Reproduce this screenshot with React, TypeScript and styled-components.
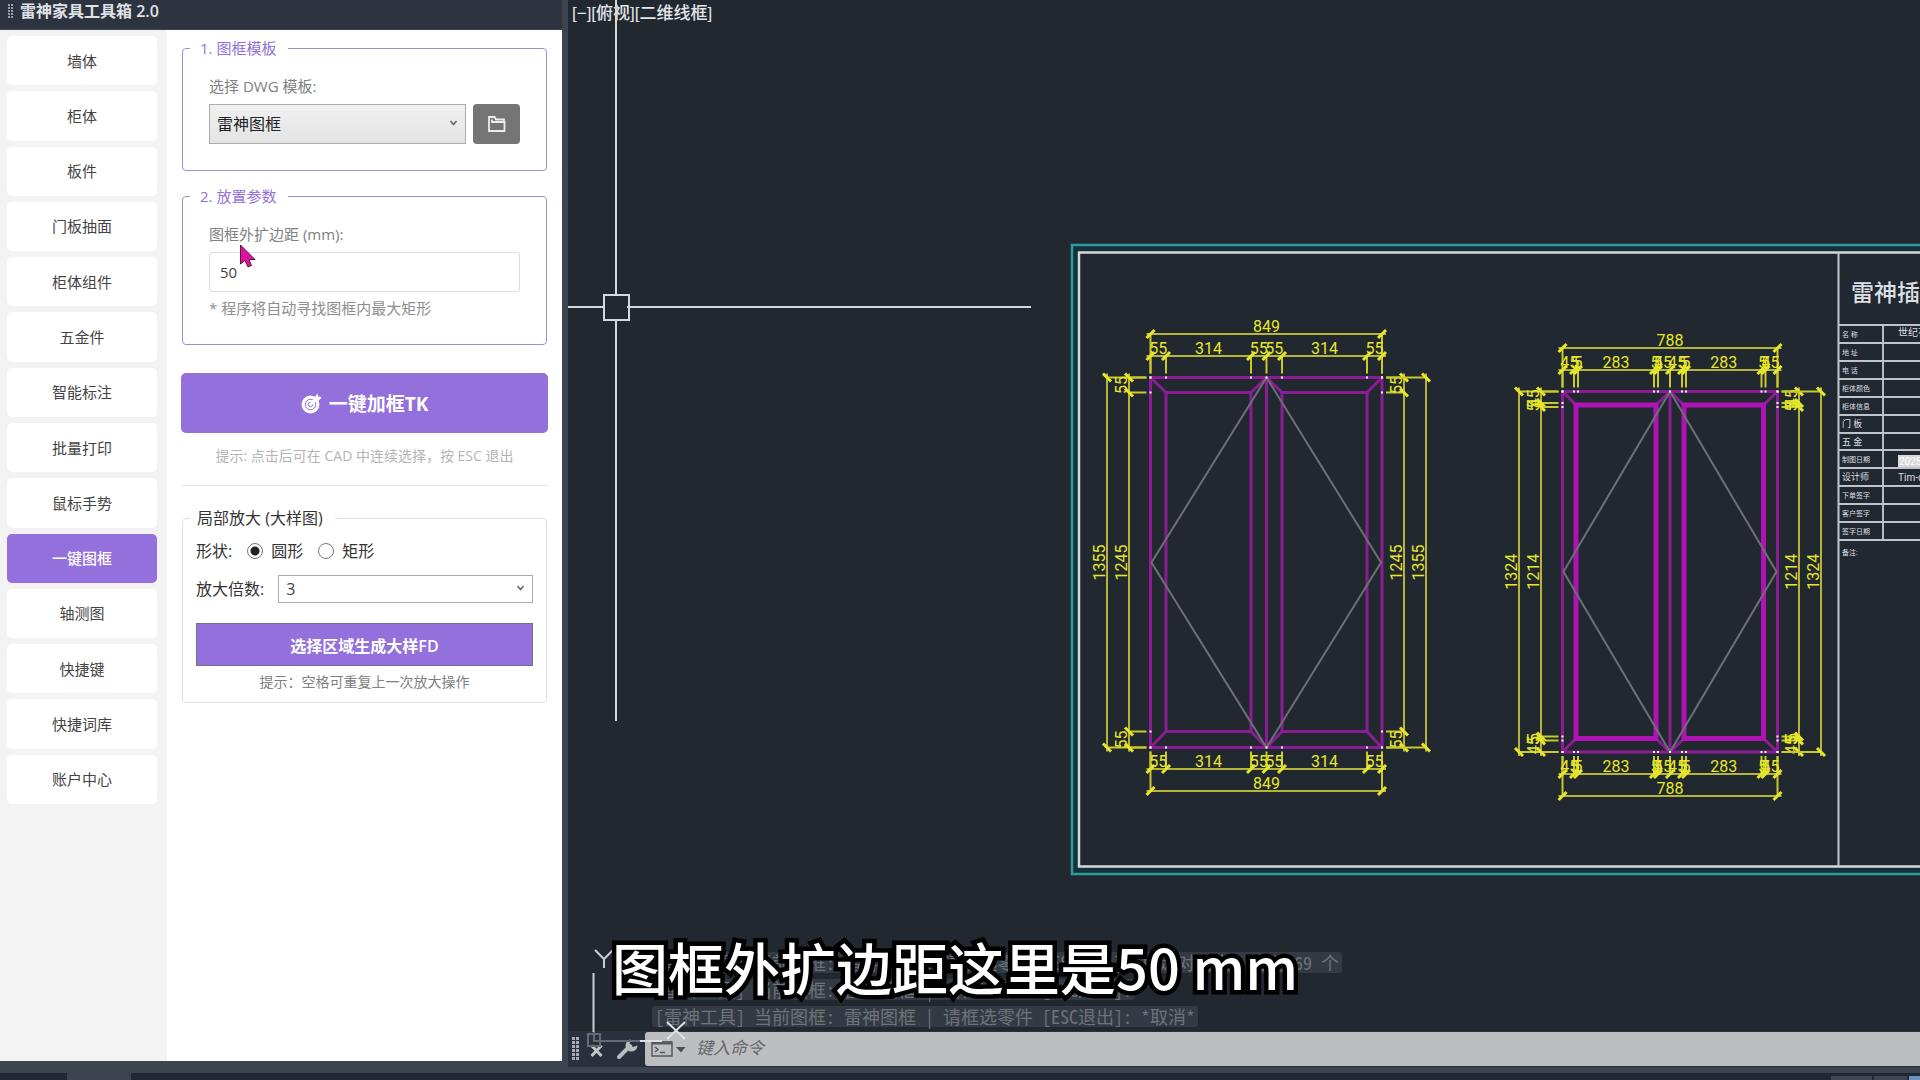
import React, { useState } from "react";
import styled, { createGlobalStyle } from "styled-components";

const UI_FONT = `"Open Sans", "Noto Sans CJK SC", sans-serif`;
const CAD_FONT = `Roboto, "Noto Sans CJK SC", sans-serif`;
const PURPLE = "#9370db";
const YELLOW = "#e6e62a";

const GlobalStyle = createGlobalStyle`
  * { box-sizing: border-box; }
  body { margin: 0; background: #222833; font-family: ${UI_FONT}; overflow: hidden; }
  button, input, select { font-family: inherit; }
`;

const Screen = styled.div`
  display: flex;
  flex-direction: column;
  height: 100vh;
  background: #3c444f;
`;

const Main = styled.div`
  display: flex;
  flex: 1;
  min-height: 0;
`;

/* ---------- tool palette ---------- */

const Palette = styled.aside`
  display: flex;
  flex-direction: column;
  width: 562px;
  margin-bottom: 6px;
  flex-shrink: 0;
`;

const TitleBar = styled.header`
  display: flex;
  align-items: center;
  gap: 6px;
  height: 30px;
  padding: 0 8px 7px;
  background: #2e3340;
  border-bottom: 1px solid #3d4452;
  color: #dfe2e6;
`;

const Title = styled.h1`
  margin: 0;
  font-size: 16px;
  line-height: 20px;
  font-weight: 600;
`;

const PaletteBody = styled.div`
  display: flex;
  flex: 1;
  min-height: 0;
`;

const Sidebar = styled.nav`
  width: 167px;
  padding: 6px 10px 0 7px;
  background: #f3f3f3;
`;

const NavList = styled.div`
  display: grid;
  grid-auto-rows: 1fr;
  gap: 6px;
  height: 768px;
`;

const NavButton = styled.button<{ $active?: boolean }>`
  border: 0;
  border-radius: 5px;
  padding: 0;
  background: ${(p) => (p.$active ? PURPLE : "#fff")};
  color: ${(p) => (p.$active ? "#fff" : "#444")};
  font-size: 15px;
  line-height: 20px;
  font-weight: ${(p) => (p.$active ? 500 : 400)};
`;

const Panel = styled.section`
  flex: 1;
  padding: 8px 14px;
  background: #fff;
`;

const Group = styled.fieldset<{ $plain?: boolean }>`
  min-width: 0;
  margin: 0 1px 15px;
  padding: ${(p) => (p.$plain ? "13px 13px 10px" : "18px 26px 26px")};
  border: 1px solid ${(p) => (p.$plain ? "#dce2e5" : "#9c8fcb")};
  border-radius: 4px;
`;

const Legend = styled.legend<{ $plain?: boolean }>`
  margin-left: ${(p) => (p.$plain ? -6 : -19)}px;
  padding: ${(p) => (p.$plain ? "0 12px 0 7px" : "0 12px 0 10px")};
  font-size: ${(p) => (p.$plain ? 16 : 15)}px;
  line-height: 20px;
  color: ${(p) => (p.$plain ? "#333" : PURPLE)};
`;

const FieldLabel = styled.label`
  display: block;
  margin-bottom: 8px;
  font-size: 15px;
  line-height: 20px;
  color: #808080;
`;

const TemplateRow = styled.div`
  display: flex;
  gap: 7px;
`;

const SelectWrap = styled.div`
  position: relative;
  flex: 1;
  display: flex;
`;

const Select = styled.select<{ $flat?: boolean }>`
  appearance: none;
  flex: 1;
  height: ${(p) => (p.$flat ? 28 : 40)}px;
  padding: 0 24px 0 7px;
  border: 1px solid #acacac;
  border-radius: 0;
  background: ${(p) => (p.$flat ? "#fff" : "linear-gradient(#f0f0f0, #e4e4e4)")};
  color: ${(p) => (p.$flat ? "#444" : "#222")};
  font-size: 16px;
`;

const SelectArrow = styled.svg`
  position: absolute;
  right: 8px;
  top: calc(50% - 5px);
  pointer-events: none;
`;

const BrowseButton = styled.button`
  display: grid;
  place-items: center;
  width: 47px;
  height: 40px;
  padding: 0;
  border: 0;
  border-radius: 4px;
  background: #757575;
`;

const TextInput = styled.input`
  display: block;
  width: 100%;
  height: 40px;
  padding: 0 10px;
  border: 1px solid #ddd;
  border-radius: 3px;
  background: #fff;
  color: #444;
  font-size: 15px;
`;

const Note = styled.p`
  margin: 6px 0 0;
  font-size: 15px;
  line-height: 20px;
  color: #8e8e8e;
`;

const PrimaryButton = styled.button`
  display: flex;
  align-items: center;
  justify-content: center;
  gap: 7px;
  width: 100%;
  height: 60px;
  margin-top: 28px;
  border: 0;
  border-radius: 5px;
  background: ${PURPLE};
  color: #fff;
  font-size: 19px;
  font-weight: 700;
`;

const Tip = styled.p<{ $light?: boolean }>`
  margin: ${(p) => (p.$light ? "13px 0 19px" : "6px 0 0")};
  font-size: 14px;
  line-height: 20px;
  text-align: center;
  color: ${(p) => (p.$light ? "#b4b4b4" : "#808080")};
`;

const Divider = styled.hr`
  height: 1px;
  margin: 0 0 22px;
  border: 0;
  background: #e6e6e6;
`;

const ShapeRow = styled.div`
  display: flex;
  align-items: center;
  height: 20px;
  font-size: 16px;
  line-height: 20px;
  color: #333;
`;

const RadioLabel = styled.label`
  display: flex;
  align-items: center;
  gap: 8px;
  margin-left: 15px;
`;

const Radio = styled.input`
  appearance: none;
  width: 16px;
  height: 16px;
  margin: 0;
  border: 1px solid #777;
  border-radius: 50%;
  background: #fff;
  &:checked {
    background: radial-gradient(circle, #222 0 4px, #fff 5px);
  }
`;

const ScaleRow = styled.div`
  display: flex;
  align-items: center;
  gap: 14px;
  margin: 14px 0 20px;
  font-size: 16px;
  line-height: 20px;
  color: #333;
`;

const RegionButton = styled.button`
  width: 100%;
  height: 43px;
  border: 1px solid #75708a;
  background: ${PURPLE};
  color: #fff;
  font-size: 16px;
  font-weight: 600;
`;

/* ---------- drawing workspace ---------- */

const Workspace = styled.main`
  position: relative;
  display: flex;
  flex-direction: column;
  flex: 1;
  min-width: 0;
  margin-left: 6px;
  overflow: hidden;
  background: #212830;
`;

const ViewLabel = styled.div`
  flex: 1;
  padding: 3px 4px;
  color: #e3e5e8;
  font-family: "Liberation Sans", "Noto Sans CJK SC", sans-serif;
  font-size: 17px;
  line-height: 22px;
  font-weight: 500;
`;

const Overlay = styled.svg`
  position: absolute;
  inset: 0;
  width: 100%;
  height: 100%;
  pointer-events: none;
`;

const History = styled.ol`
  display: flex;
  flex-direction: column;
  align-items: flex-start;
  gap: 6px;
  margin: 0 0 4px 84px;
  padding: 0;
  list-style: none;
`;

const HistoryLine = styled.li`
  padding: 0 3px;
  border-radius: 3px;
  background: #343a43;
  color: #6d7379;
  font-family: "Noto Sans Mono CJK SC", "Liberation Mono", "Noto Sans CJK SC", monospace;
  font-size: 18px;
  line-height: 21px;
  white-space: pre;
`;

const CommandBar = styled.div`
  display: flex;
  align-items: center;
  height: 36px;
  background: #2b313c;
`;

const IconButton = styled.button`
  display: grid;
  place-items: center;
  padding: 0;
  border: 0;
  background: none;
`;

const CommandTools = styled.div`
  display: flex;
  align-items: center;
  gap: 10px;
  width: 77px;
  padding-left: 4px;
`;

const CommandField = styled.div`
  display: flex;
  align-items: center;
  flex: 1;
  height: 34px;
  padding-left: 6px;
  border-radius: 3px 0 0 3px;
  background: #bcbec0;
`;

const CommandInput = styled.input`
  flex: 1;
  height: 34px;
  padding: 0 0 4px 9px;
  border: 0;
  background: none;
  font-size: 17px;
  font-style: italic;
  &::placeholder { color: #65696d; }
`;

const Subtitle = styled.div`
  position: absolute;
  left: 612px;
  bottom: 72px;
  color: #fff;
  font-family: "Noto Sans CJK SC", sans-serif;
  font-size: 56px;
  line-height: 84px;
  font-weight: 500;
  white-space: nowrap;
  -webkit-text-stroke: 9px #000;
  paint-order: stroke fill;
  stroke-linejoin: round;
`;

const Pointer = styled.svg`
  position: absolute;
  left: 239px;
  top: 244px;
`;

const StatusBar = styled.footer`
  display: flex;
  justify-content: space-between;
  height: 7px;
  margin-top: 6px;
  background: #222833;
`;

const StatusTab = styled.div`
  width: 64px;
  margin-left: 67px;
  background: #3c444f;
`;

const StatusButtons = styled.div`
  display: flex;
  gap: 2px;
  padding-top: 3px;
`;

const StatusChip = styled.div<{ $w: number; $on?: boolean }>`
  width: ${(p) => p.$w}px;
  background: ${(p) => (p.$on ? "#6f93bd" : "#3f4654")};
`;

/* ---------- drawing primitives ---------- */

type Pt = { x: number; y: number };

const Tick = ({ x, y }: Pt) => (
  <path d={`M${x - 4} ${y + 4}L${x + 4} ${y - 4}`} stroke={YELLOW} strokeWidth={3} />
);

const TickV = ({ x, y }: Pt) => (
  <path d={`M${x - 4} ${y - 4}L${x + 4} ${y + 4}`} stroke={YELLOW} strokeWidth={3} />
);

const DimText = ({ x, y, children, vertical }: Pt & { children: string; vertical?: boolean }) => (
  <text
    x={x}
    y={y}
    fill={YELLOW}
    fontFamily={CAD_FONT}
    fontSize={16}
    textAnchor="middle"
    transform={vertical ? `rotate(-90 ${x} ${y})` : undefined}
  >
    {children}
  </text>
);

type DimRow = { at: number; stops: number[]; labels: { at: number; text: string }[]; ext: number };

const HDim = ({ at, stops, labels, ext }: DimRow) => (
  <g>
    <path d={`M${stops[0] - 4} ${at}H${stops[stops.length - 1] + 4}`} stroke="#b5b53a" strokeWidth={2} />
    {stops.map((s) => (
      <g key={s}>
        <path d={`M${s} ${at}V${ext}`} stroke="#c9c92e" strokeWidth={2} />
        <Tick x={s} y={at} />
      </g>
    ))}
    {labels.map((l, i) => (
      <DimText key={i} x={l.at} y={at - 2}>{l.text}</DimText>
    ))}
  </g>
);

const VDim = ({ at, stops, labels, ext }: DimRow) => (
  <g>
    <path d={`M${at} ${stops[0] - 4}V${stops[stops.length - 1] + 4}`} stroke="#b5b53a" strokeWidth={2} />
    {stops.map((s) => (
      <g key={s}>
        <path d={`M${at} ${s}H${ext}`} stroke="#c9c92e" strokeWidth={2} />
        <TickV x={at} y={s} />
      </g>
    ))}
    {labels.map((l, i) => (
      <DimText key={i} x={at - 2} y={l.at} vertical>{l.text}</DimText>
    ))}
  </g>
);

type Door = {
  xs: number[];
  ys: number[];
  inner: number;
  innerColor: string;
  hTop: [number, number];
  hBottom: [number, number];
  vLeft: [number, number];
  vRight: [number, number];
  width: string;
  height: string;
  innerHeight: string;
  leaf: string;
  split: number;
};

const FRAME = "#8a1d93";

const DoorDrawing = ({ d }: { d: Door }) => {
  const [x0, x1, x2, xc, x3, x4, x5] = d.xs;
  const [y0, y1, y2, y3] = d.ys;
  const mid = (y0 + y3) / 2;
  const s = d.split;
  const pair = (v: number) => (s ? [v - s, v + s] : [v]);
  const hStops = [x0, ...pair(x1), ...pair(x2), xc, ...pair(x3), ...pair(x4), x5];
  const vStops = [y0, ...pair(y1), ...pair(y2), y3];
  const small = (a: number, b: number, outerFirst: boolean) => {
    const m = (a + b) / 2;
    if (!s) return [{ at: m, text: "55" }];
    const edge = outerFirst ? b : a;
    return [{ at: m, text: "45" }, { at: edge - 1, text: "5" }, { at: edge + 2, text: "5" }];
  };
  const hLabels = [
    ...small(x0, x1, true),
    { at: (x1 + x2) / 2, text: d.leaf },
    ...small(x2, xc, false),
    ...small(xc, x3, true),
    { at: (x3 + x4) / 2, text: d.leaf },
    ...small(x4, x5, false),
  ];
  const vLabels = [
    ...small(y0, y1, true),
    { at: mid, text: d.innerHeight },
    ...small(y2, y3, false),
  ];
  const whole = [{ at: xc, text: d.width }];
  const tall = [{ at: mid, text: d.height }];
  return (
    <g fill="none">
      <g stroke={FRAME} strokeWidth={3}>
        <path d={`M${x0} ${y0}H${x5}V${y3}H${x0}ZM${xc} ${y0}V${y3}`} />
        <path
          d={`M${x0} ${y0}L${x1} ${y1}M${xc} ${y0}L${x2} ${y1}M${xc} ${y0}L${x3} ${y1}M${x5} ${y0}L${x4} ${y1}
              M${x0} ${y3}L${x1} ${y2}M${xc} ${y3}L${x2} ${y2}M${xc} ${y3}L${x3} ${y2}M${x5} ${y3}L${x4} ${y2}`}
        />
      </g>
      <path
        d={`M${x1} ${y1}H${x2}V${y2}H${x1}ZM${x3} ${y1}H${x4}V${y2}H${x3}Z`}
        stroke={d.innerColor}
        strokeWidth={d.inner}
      />
      <path
        d={`M${xc} ${y0}L${x0 + 1} ${mid}L${xc} ${y3}L${x5 - 1} ${mid}Z`}
        stroke="#6c7074"
        strokeWidth={2}
      />
      <HDim at={d.hTop[0]} stops={[x0, x5]} labels={whole} ext={y0 - 4} />
      <HDim at={d.hTop[1]} stops={hStops} labels={hLabels} ext={y0 - 4} />
      <HDim at={d.hBottom[1]} stops={[x0, x5]} labels={whole} ext={y3 + 4} />
      <HDim at={d.hBottom[0]} stops={hStops} labels={hLabels} ext={y3 + 4} />
      <VDim at={d.vLeft[0]} stops={[y0, y3]} labels={tall} ext={x0 - 4} />
      <VDim at={d.vLeft[1]} stops={vStops} labels={vLabels} ext={x0 - 4} />
      <VDim at={d.vRight[0]} stops={vStops} labels={vLabels} ext={x5 + 4} />
      <VDim at={d.vRight[1]} stops={[y0, y3]} labels={tall} ext={x5 + 4} />
      <g fill="#fff">
        {hStops.map((x) => [y0, y3].map((y) => <rect key={`${x}-${y}`} x={x - 1} y={y - 1} width={2} height={2} />))}
        {vStops.map((y) => [x0, x5].map((x) => <rect key={`${x}-${y}`} x={x - 1} y={y - 1} width={2} height={2} />))}
      </g>
    </g>
  );
};

const doors: Door[] = [
  {
    xs: [1150.5, 1166, 1251, 1266.5, 1282, 1367, 1382],
    ys: [377.5, 392.5, 731.5, 747.5],
    inner: 3, innerColor: FRAME, split: 0,
    hTop: [334, 356], hBottom: [769, 791], vLeft: [1107, 1129], vRight: [1404, 1426],
    width: "849", height: "1355", innerHeight: "1245", leaf: "314",
  },
  {
    xs: [1562.5, 1576, 1656, 1670, 1684, 1763.5, 1777.5],
    ys: [391.5, 405, 738.5, 752],
    inner: 5, innerColor: "#b013b5", split: 2,
    hTop: [348, 370], hBottom: [774, 796], vLeft: [1519, 1541], vRight: [1799, 1821],
    width: "788", height: "1324", innerHeight: "1214", leaf: "283",
  },
];

const titleRows = [
  "名  称", "地  址", "电  话", "柜体颜色", "柜体信息", "门   板", "五   金",
  "制图日期", "设计师", "下单签字", "客户签字", "签字日期",
];
const rowTop = (i: number) => 325 + Math.round((i * 215) / 12);

const DrawingSheet = () => (
  <g fill="none">
    <rect x={1076} y={249} width={1100} height={621} stroke="#12323a" strokeWidth={5} />
    <rect x={1072} y={245} width={1100} height={629} stroke="#2f9b9b" strokeWidth={2.5} />
    <path d="M2000 252.5H1079V866.5H2000" stroke="#d5d7d9" strokeWidth={2.5} />
    <path d="M1838.5 252V866" stroke="#c4c7cc" strokeWidth={2} />
    <path d="M1883 325V540" stroke="#b9bcc4" strokeWidth={2} />
    {Array.from({ length: 13 }, (_, i) => (
      <path key={i} d={`M1838 ${rowTop(i)}H2000`} stroke="#c0c3cb" strokeWidth={2} />
    ))}
    <g fill="#dcdfe3" fontFamily={CAD_FONT} fontSize={10} style={{ whiteSpace: "pre" }}>
      {titleRows.map((t, i) => (
        <text key={t} x={1842} y={rowTop(i) + 12} fontSize={t.length === 4 ? 7 : 9}>{t}</text>
      ))}
      <text x={1842} y={555} fontSize={7}>备注:</text>
      <text x={1898} y={336}>世纪花园</text>
      <rect x={1898} y={455} width={60} height={12} fill="#d9d9d9" />
      <text x={1899} y={465} fill="#fff">2025</text>
      <text x={1898} y={481}>Tim-design</text>
      <text x={1851} y={301} fontSize={23} fontWeight={500}>雷神插件</text>
    </g>
  </g>
);

const Crosshair = () => (
  <g fill="none" stroke="#d6d8db" strokeWidth={2}>
    <path d="M616 0V294M616 321V721M568 307H603M627 307H1031" />
    <rect x={604} y={295} width={25} height={25} />
  </g>
);

const UcsIcon = () => (
  <g fill="none" stroke="#c9ccd0" strokeWidth={2}>
    <path d="M593.5 973V1032M595 950L604 959L613 950M604 959V968" />
    <path d="M594 1032V1041H640" stroke="#656b75" />
    <path d="M640 1041H662" stroke="#dfe0e1" />
    <rect x={588} y={1034} width={12} height={12} stroke="#656b75" />
    <path d="M667 1022L685 1039M685 1022L667 1039" stroke="#dfe0e1" />
  </g>
);

const Grip = ({ cols, rows, color, pitch }: { cols: number; rows: number; color: string; pitch: number }) => (
  <svg width={cols * pitch} height={rows * pitch} fill={color} style={{ flexShrink: 0 }}>
    {Array.from({ length: cols * rows }, (_, i) => (
      <rect key={i} x={(i % cols) * pitch} y={Math.floor(i / cols) * pitch} width={pitch - 1} height={pitch - 1} />
    ))}
  </svg>
);

const Chevron = () => (
  <SelectArrow width={9} height={8} viewBox="0 0 9 8" fill="none" stroke="#666" strokeWidth={1.6}>
    <path d="M1.5 2L4.5 5.5L7.5 2" />
  </SelectArrow>
);

const FolderIcon = () => (
  <svg width={20} height={18} viewBox="0 0 20 18" fill="none" stroke="#e9efec" strokeWidth={1.8}>
    <path d="M2 5V2H7.500L9 4.500H17V7M2 5V16H17.500V7H5V4.500" />
  </svg>
);

const TargetIcon = () => (
  <svg width={21} height={21} viewBox="0 0 21 21" fill="none">
    <circle cx={9.5} cy={11.5} r={9} fill="#fff" />
    <circle cx={9.5} cy={11.5} r={5.2} stroke={PURPLE} strokeWidth={1} />
    <circle cx={9.5} cy={11.5} r={2.2} stroke={PURPLE} strokeWidth={1} />
    <path d="M9.5 11.5L14 7" stroke="#fff" strokeWidth={2.6} />
    <path d="M12.5 6L16.5 0.5L17.5 3.5L20.8 4.5L16 9Z" fill="#fff" />
  </svg>
);

const navItems = [
  "墙体", "柜体", "板件", "门板抽面", "柜体组件", "五金件", "智能标注", "批量打印",
  "鼠标手势", "一键图框", "轴测图", "快捷键", "快捷词库", "账户中心",
];

const prompt = "[雷神工具] 当前图框: 雷神图框 | 请框选零件 [ESC退出]:";
const history = [`${prompt} 指定对角点: 找到 69 个`, prompt, `${prompt} *取消*`];

export default function App() {
  const [active, setActive] = useState("一键图框");
  const [shape, setShape] = useState("圆形");
  return (
    <>
      <GlobalStyle />
      <Screen>
        <Main>
          <Palette>
            <TitleBar>
              <Grip cols={2} rows={5} color="#9aa0a8" pitch={3} />
              <Title>雷神家具工具箱 2.0</Title>
            </TitleBar>
            <PaletteBody>
              <Sidebar>
                <NavList>
                  {navItems.map((n) => (
                    <NavButton key={n} $active={n === active} onClick={() => setActive(n)}>{n}</NavButton>
                  ))}
                </NavList>
              </Sidebar>
              <Panel>
                <Group>
                  <Legend>1. 图框模板</Legend>
                  <FieldLabel htmlFor="template">选择 DWG 模板:</FieldLabel>
                  <TemplateRow>
                    <SelectWrap>
                      <Select id="template"><option>雷神图框</option></Select>
                      <Chevron />
                    </SelectWrap>
                    <BrowseButton aria-label="浏览"><FolderIcon /></BrowseButton>
                  </TemplateRow>
                </Group>
                <Group>
                  <Legend>2. 放置参数</Legend>
                  <FieldLabel htmlFor="margin">图框外扩边距 (mm):</FieldLabel>
                  <TextInput id="margin" defaultValue="50" />
                  <Note>* 程序将自动寻找图框内最大矩形</Note>
                </Group>
                <PrimaryButton><TargetIcon />一键加框TK</PrimaryButton>
                <Tip $light>提示: 点击后可在 CAD 中连续选择，按 ESC 退出</Tip>
                <Divider />
                <Group $plain>
                  <Legend $plain>局部放大 (大样图)</Legend>
                  <ShapeRow>
                    形状:
                    {["圆形", "矩形"].map((s) => (
                      <RadioLabel key={s}>
                        <Radio type="radio" name="shape" checked={shape === s} onChange={() => setShape(s)} />
                        {s}
                      </RadioLabel>
                    ))}
                  </ShapeRow>
                  <ScaleRow>
                    <label htmlFor="scale">放大倍数:</label>
                    <SelectWrap>
                      <Select id="scale" $flat><option>3</option></Select>
                      <Chevron />
                    </SelectWrap>
                  </ScaleRow>
                  <RegionButton>选择区域生成大样FD</RegionButton>
                  <Tip>提示：空格可重复上一次放大操作</Tip>
                </Group>
              </Panel>
            </PaletteBody>
          </Palette>
          <Workspace>
            <ViewLabel>[−][俯视][二维线框]</ViewLabel>
            <History>
              {history.map((h) => <HistoryLine key={h}>{h}</HistoryLine>)}
            </History>
            <CommandBar>
              <CommandTools>
                <Grip cols={2} rows={6} color="#a9adb3" pitch={4} />
                <IconButton aria-label="关闭">
                  <svg width={13} height={20} viewBox="0 0 13 20" stroke="#c3c6ca" strokeWidth={3}>
                    <path d="M1.5 6.5L11.5 17M11.5 6.5L1.5 17" />
                  </svg>
                </IconButton>
                <IconButton aria-label="自定义">
                  <svg width={28} height={22} viewBox="4 0 28 22" fill="none">
                    <path d="M10 19L21 8" stroke="#b9bcc1" strokeWidth={4} strokeLinecap="round" />
                    <path d="M22 1.5A6 6 0 1 0 28.5 7.5L24 9L20.5 5.5Z" fill="#b9bcc1" />
                  </svg>
                </IconButton>
              </CommandTools>
              <CommandField>
                <IconButton aria-label="最近使用的命令">
                  <svg width={36} height={18} viewBox="0 0 36 18" fill="none">
                    <path d="M1 2H21V16H1Z" stroke="#55595d" strokeWidth={1.5} />
                    <path d="M1 3H21" stroke="#55595d" strokeWidth={3} />
                    <path d="M4 7L7 9.5L4 12M9 12.5H14" stroke="#55595d" strokeWidth={1.4} />
                    <path d="M25 7H34.500L30 12.500Z" fill="#4c5054" />
                  </svg>
                </IconButton>
                <CommandInput aria-label="命令" placeholder="键入命令" />
              </CommandField>
            </CommandBar>
            <Overlay>
              <g transform="translate(-568 0)">
                <DrawingSheet />
                {doors.map((d) => <DoorDrawing key={d.width} d={d} />)}
                <Crosshair />
                <UcsIcon />
              </g>
            </Overlay>
          </Workspace>
        </Main>
        <StatusBar>
          <StatusTab />
          <StatusButtons>
            <StatusChip $w={41} />
            <StatusChip $w={33} />
            <StatusChip $w={11} $on />
          </StatusButtons>
        </StatusBar>
      </Screen>
      <Subtitle>图框外扩边距这里是50 mm</Subtitle>
      <Pointer width={18} height={26} viewBox="0 0 18 26">
        <path d="M1.500 1V20L6 16.500L9 23L12.500 21.500L10 15.500H16Z" fill="#e0119d" stroke="#5a1746" strokeWidth={1} />
      </Pointer>
    </>
  );
}
